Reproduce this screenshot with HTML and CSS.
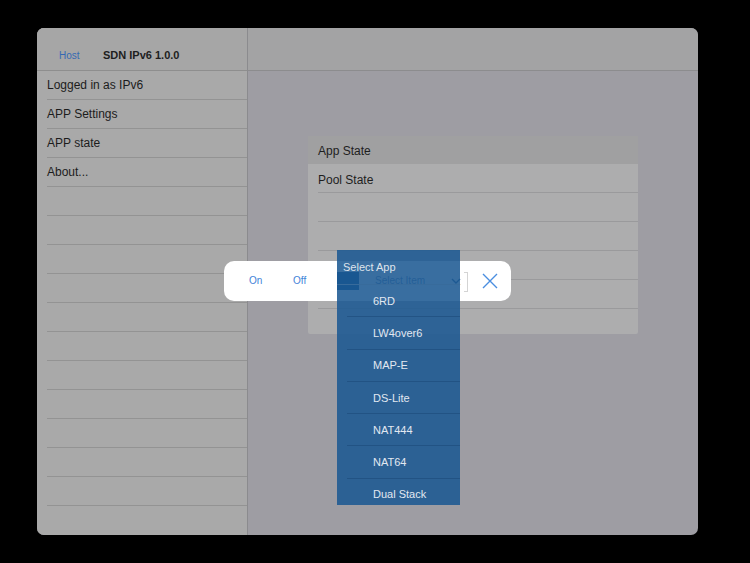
FILE: index.html
```html
<!DOCTYPE html>
<html>
<head>
<meta charset="utf-8">
<link rel="stylesheet" href="styles.css">
</head>
<body>
<div class="device">
  <aside class="sidebar">
    <div class="side-head">
      <span class="host">Host</span>
      <span class="title">SDN IPv6 1.0.0</span>
    </div>
    <div class="row">Logged in as IPv6</div>
    <div class="row">APP Settings</div>
    <div class="row">APP state</div>
    <div class="row">About...</div>
    <div class="row"></div>
    <div class="row"></div>
    <div class="row"></div>
    <div class="row"></div>
    <div class="row"></div>
    <div class="row"></div>
    <div class="row"></div>
    <div class="row"></div>
    <div class="row"></div>
    <div class="row"></div>
    <div class="row"></div>
  </aside>
  <main class="main">
    <div class="main-head"></div>
    <div class="table">
      <div class="trow sel">App State</div>
      <div class="trow">Pool State</div>
      <div class="trow"></div>
      <div class="trow"></div>
      <div class="trow"></div>
      <div class="trow"></div>
      <div class="trow last"></div>
    </div>
  </main>

  <div class="popup">
    <span class="btn on">On</span>
    <span class="btn off">Off</span>
    <div class="select">
      <span class="sel-block"></span>
      <span class="sel-ghost">Select Item</span>
      <svg class="chev" width="10" height="6" viewBox="0 0 10 6"><path d="M1 1 L5 5 L9 1" fill="none" stroke="#2a5d92" stroke-width="1.4"/></svg>
      <span class="sel-line"></span>
    </div>
    <span class="bracket"></span>
    <svg class="close" width="18" height="18" viewBox="0 0 18 18"><path d="M2 2 L16 16 M16 2 L2 16" stroke="#4a8ee0" stroke-width="1.4" fill="none"/></svg>
  </div>

  <div class="dropdown">
    <div class="dd-head">Select App</div>
    <div class="dd-item">6RD</div>
    <div class="dd-item">LW4over6</div>
    <div class="dd-item">MAP-E</div>
    <div class="dd-item">DS-Lite</div>
    <div class="dd-item">NAT444</div>
    <div class="dd-item">NAT64</div>
    <div class="dd-item">Dual Stack</div>
  </div>
</div>
</body>
</html>
```

FILE: styles.css
```css
html, body {
  margin: 0;
  padding: 0;
  background: #000;
  width: 750px;
  height: 563px;
  overflow: hidden;
  font-family: "Liberation Sans", Arial, sans-serif;
}

.device {
  position: relative;
  margin: 28px 0 0 37px;
  width: 661px;
  height: 507px;
  border-radius: 7px;
  overflow: hidden;
  display: flex;
  background: #9e9da3;
}

.sidebar {
  width: 210px;
  flex: none;
  background: #a9a9a9;
  border-right: 1px solid #8b8b8e;
  display: flex;
  flex-direction: column;
}

.side-head {
  height: 43px;
  flex: none;
  box-sizing: border-box;
  border-bottom: 1px solid #8e8e8e;
  background: #a6a6a6;
  display: flex;
  align-items: center;
  padding: 12px 0 0 22px;
}

.host {
  font-size: 10px;
  color: #3569b3;
  width: 44px;
}

.title {
  font-size: 11px;
  font-weight: bold;
  color: #1e1e1e;
}

.row {
  height: 29px;
  flex: none;
  box-sizing: border-box;
  margin-left: 10px;
  border-bottom: 1px solid #939393;
  font-size: 12px;
  color: #1c1c1c;
  display: flex;
  align-items: center;
}

.main {
  flex: 1;
  display: flex;
  flex-direction: column;
}

.main-head {
  height: 43px;
  flex: none;
  box-sizing: border-box;
  background: #a3a3a4;
  border-bottom: 1px solid #8c8c8e;
}

.table {
  margin: 65px 0 0 60px;
  width: 330px;
  background: #adadae;
  border-radius: 2px;
}

.trow {
  height: 29px;
  box-sizing: border-box;
  margin-left: 10px;
  padding-top: 3px;
  border-bottom: 1px solid #9a9a9c;
  font-size: 12px;
  color: #1e1e1e;
  display: flex;
  align-items: center;
}

.trow.sel {
  margin-left: 0;
  padding: 1px 0 0 10px;
  height: 28px;
  background: #a0a0a1;
  border-bottom: none;
}

.trow.last {
  border-bottom: none;
  height: 25px;
}

.popup {
  position: absolute;
  left: 187px;
  top: 233px;
  width: 287px;
  height: 40px;
  background: #fff;
  border-radius: 10px;
}

.btn {
  position: absolute;
  top: 14px;
  font-size: 10px;
  color: #3f83d8;
}

.btn.on { left: 25px; }
.btn.off { left: 69px; }

.select {
  position: absolute;
  left: 113px;
  top: 11px;
  width: 124px;
  height: 19px;
}

.sel-block {
  position: absolute;
  left: 0;
  top: 0;
  width: 22px;
  height: 18px;
  background: #0f4d8f;
}

.sel-ghost {
  position: absolute;
  left: 38px;
  top: 3px;
  font-size: 10px;
  color: #5d86b4;
}

.chev {
  position: absolute;
  left: 114px;
  top: 6px;
}

.sel-line {
  position: absolute;
  left: 0;
  top: 12px;
  width: 124px;
  height: 1px;
  background: #f1e7d6;
}

.bracket {
  position: absolute;
  left: 240px;
  top: 11px;
  width: 3px;
  height: 18px;
  border: 1px solid #d4d4d4;
  border-left: none;
}

.close {
  position: absolute;
  left: 257px;
  top: 11px;
}

.dropdown {
  position: absolute;
  left: 300px;
  top: 222px;
  width: 123px;
  height: 255px;
  overflow: hidden;
  background: rgba(28, 88, 146, 0.87);
}

.dd-head {
  height: 35px;
  box-sizing: border-box;
  padding: 11px 0 0 6px;
  font-size: 11px;
  color: #dfe4ec;
}

.dd-item {
  height: 32.3px;
  box-sizing: border-box;
  margin-left: 10px;
  padding-left: 26px;
  border-bottom: 1px solid rgba(22, 66, 112, 0.45);
  font-size: 11px;
  color: #e2e8f1;
  display: flex;
  align-items: center;
}
```
